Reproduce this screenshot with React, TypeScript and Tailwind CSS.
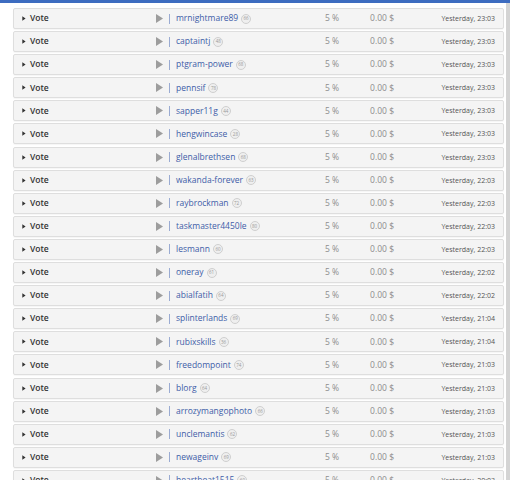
import { ReactNode } from "react";

type Vote = { voter: string; rep: number; time: string };

const votes: Vote[] = [
  { voter: "mrnightmare89", rep: 66, time: "Yesterday, 23:03" },
  { voter: "captaintj", rep: 48, time: "Yesterday, 23:03" },
  { voter: "ptgram-power", rep: 68, time: "Yesterday, 23:03" },
  { voter: "pennsif", rep: 78, time: "Yesterday, 23:03" },
  { voter: "sapper11g", rep: 44, time: "Yesterday, 23:03" },
  { voter: "hengwincase", rep: 28, time: "Yesterday, 23:03" },
  { voter: "glenalbrethsen", rep: 68, time: "Yesterday, 23:03" },
  { voter: "wakanda-forever", rep: 63, time: "Yesterday, 22:03" },
  { voter: "raybrockman", rep: 72, time: "Yesterday, 22:03" },
  { voter: "taskmaster4450le", rep: 80, time: "Yesterday, 22:03" },
  { voter: "lesmann", rep: 60, time: "Yesterday, 22:03" },
  { voter: "oneray", rep: 61, time: "Yesterday, 22:02" },
  { voter: "abialfatih", rep: 64, time: "Yesterday, 22:02" },
  { voter: "splinterlands", rep: 69, time: "Yesterday, 21:04" },
  { voter: "rubixskills", rep: 36, time: "Yesterday, 21:04" },
  { voter: "freedompoint", rep: 74, time: "Yesterday, 21:03" },
  { voter: "blorg", rep: 64, time: "Yesterday, 21:03" },
  { voter: "arrozymangophoto", rep: 66, time: "Yesterday, 21:03" },
  { voter: "unclemantis", rep: 62, time: "Yesterday, 21:03" },
  { voter: "newageinv", rep: 69, time: "Yesterday, 21:03" },
  { voter: "heartbeat1515", rep: 60, time: "Yesterday, 20:03" },
];

function Badge({ children }: { children: ReactNode }) {
  return (
    <span className="ml-[3px] inline-flex h-[10px] w-[10px] items-center justify-center rounded-full border border-[#cfcfcf] bg-[#efefef] text-[4.5px] leading-none text-[#999]">
      {children}
    </span>
  );
}

function VoteRow({ v }: { v: Vote }) {
  return (
    <div className="flex h-[21px] shrink-0 items-center rounded-[2px] border border-[#dedede] bg-[#f4f4f4] text-[8px] leading-none shadow-[0_1px_1px_rgba(0,0,0,0.04)]">
      {/* caret + label */}
      <div className="flex w-[142px] items-center pl-[8px]">
        <svg width="4" height="5" viewBox="0 0 4 5" className="mr-[4px]">
          <path d="M0.3 0.3 L3.6 2.5 L0.3 4.7 Z" fill="#333" />
        </svg>
        <span className="text-[8.5px] font-semibold text-[#333]">Vote</span>
      </div>

      {/* play + voter */}
      <div className="flex flex-1 items-center">
        <svg width="7" height="9" viewBox="0 0 7 9">
          <path d="M0 0 L7 4.5 L0 9 Z" fill="#9d9d9d" />
        </svg>
        <span className="ml-[6px] mr-[6px] h-[10px] w-px bg-[#9aabd2]" />
        <span className="text-[8.5px] text-[#3e5da8]">{v.voter}</span>
        <Badge>{v.rep}</Badge>
      </div>

      <div className="w-[40px] text-right text-[8.5px] text-[#8d8d8d]">5 %</div>
      <div className="w-[55px] text-right text-[8.5px] text-[#8d8d8d]">0.00 $</div>
      <div className="w-[101px] text-right text-[7px] text-[#555]">{v.time}</div>
      <div className="w-[8px]" />
    </div>
  );
}

export default function App() {
  return (
    <div className="h-[480px] w-[510px] overflow-hidden bg-white font-['Open_Sans',sans-serif]">
      <div className="h-[3px] bg-[#3d6cc0]" />
      <div className="flex">
        <div className="flex flex-1 flex-col gap-[2.1px] pl-[13px] pr-[2px] pt-[5px]">
          {votes.map((v) => (
            <VoteRow key={v.voter} v={v} />
          ))}
        </div>
        <div className="h-[477px] w-[4px] bg-[#d4d4d4]" />
      </div>
    </div>
  );
}
